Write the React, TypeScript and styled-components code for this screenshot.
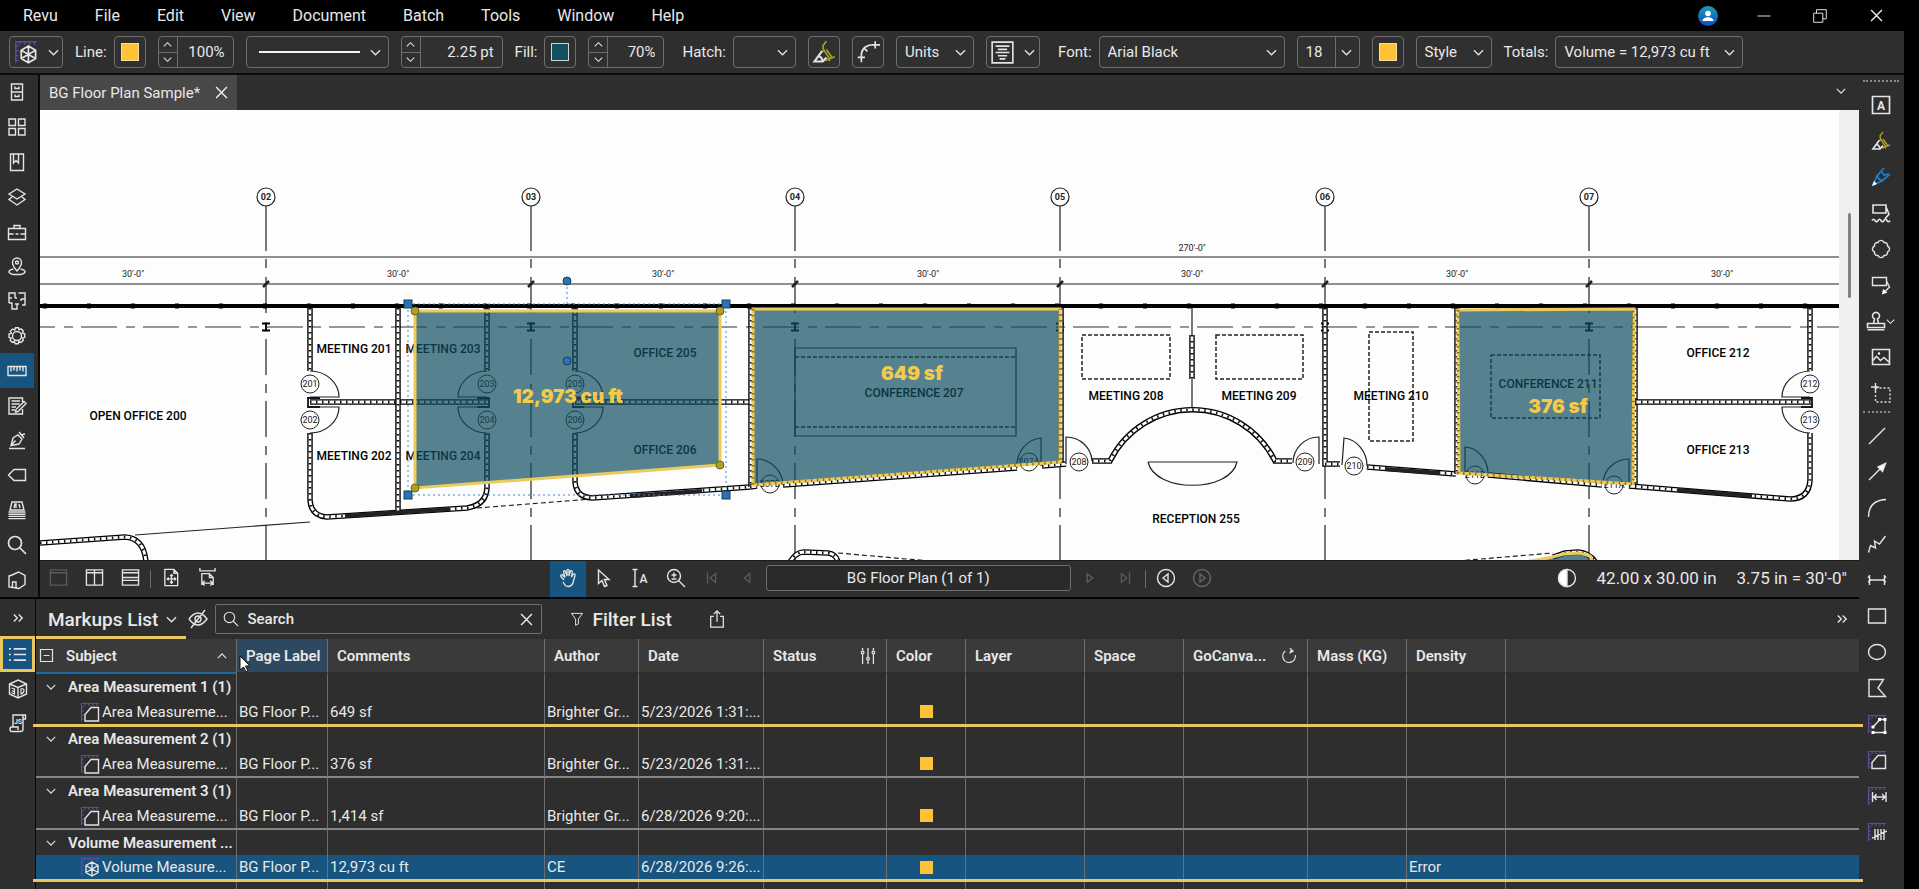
import React from "react";
import styled, { createGlobalStyle, css } from "styled-components";

const c = {
  panel: "#2e2e2e",
  header: "#3a3a3a",
  line: "#6e6e6e",
  text: "#e8e8e8",
  blue: "#17547f",
  gold: "#e9c95f",
  swatch: "#fdc236",
  purple: "#5f4a9c",
};

const GlobalStyle = createGlobalStyle`
  * { box-sizing: border-box; }
  html, body { margin: 0; background: #000; }
  body, button, input, select { font-family: Roboto, "Liberation Sans", sans-serif; font-size: 15px; color: ${c.text}; }
`;

/* ---------- page frame ---------- */

const Page = styled.div`
  min-height: 100vh;
  display: flex;
  flex-direction: column;
  background: #000;
`;

const Workspace = styled.div`
  flex: 1;
  display: flex;
  margin-right: 15px;
  background: ${c.panel};
`;

const Main = styled.main`
  flex: 1;
  min-width: 0;
  display: flex;
  flex-direction: column;
`;

const UpperPane = styled.div`
  flex: 1;
  min-height: 420px;
  display: flex;
`;

const DocumentColumn = styled.section`
  flex: 1;
  min-width: 0;
  display: flex;
  flex-direction: column;
`;

/* ---------- menu bar ---------- */

const MenuBar = styled.header`
  display: flex;
  align-items: center;
  gap: 1px;
  height: 31px;
  padding: 0 28px 0 5px;
`;

const MenuItem = styled.button`
  border: 0;
  background: none;
  padding: 0 18px;
  font-size: 16px;
  line-height: 28px;
`;

const WindowControls = styled.div`
  margin-left: auto;
  display: flex;
  align-items: center;
  gap: 26px;
`;

const BareButton = styled.button`
  border: 0;
  background: none;
  padding: 0;
  width: 30px;
  height: 28px;
  display: flex;
  align-items: center;
  justify-content: center;
`;

/* ---------- properties toolbar ---------- */

const PropertyBar = styled.div`
  display: flex;
  align-items: center;
  gap: 12px;
  height: 44px;
  margin-right: 15px;
  padding-left: 9px;
  background: ${c.panel};
  border-bottom: 2px solid #0c0c0c;
`;

const Field = styled.label<{ $section?: boolean }>`
  display: flex;
  align-items: center;
  gap: 7px;
  margin-left: ${(p) => (p.$section ? 6 : 0)}px;
`;

const frame = css`
  height: 32px;
  border: 1px solid ${c.line};
  border-radius: 4px;
  background: #303030;
`;

const ToolButton = styled.button<{ $w?: number }>`
  ${frame}
  width: ${(p) => p.$w ?? 32}px;
  padding: 0;
  display: flex;
  align-items: center;
  justify-content: center;
  gap: 10px;
`;

const Swatch = styled.span<{ $color: string; $edge: string }>`
  width: 18px;
  height: 18px;
  background: ${(p) => p.$color};
  border: 1px solid ${(p) => p.$edge};
`;

const Spinner = styled.div<{ $w: number }>`
  ${frame}
  width: ${(p) => p.$w}px;
  display: flex;
`;

const Steps = styled.div`
  width: 19px;
  display: flex;
  flex-direction: column;
  border-right: 1px solid ${c.line};
`;

const Step = styled.button`
  flex: 1;
  border: 0;
  padding: 0;
  background: none;
  display: flex;
  align-items: center;
  justify-content: center;
  & + & { border-top: 1px solid ${c.line}; }
`;

const SpinnerInput = styled.input`
  flex: 1;
  min-width: 0;
  border: 0;
  background: none;
  text-align: right;
  padding: 0 8px 0 0;
`;

const SelectFrame = styled.span<{ $w: number }>`
  ${frame}
  width: ${(p) => p.$w}px;
  display: grid;
  align-items: center;
  & > * { grid-area: 1 / 1; }
  & > svg { justify-self: end; margin-right: 7px; pointer-events: none; }
`;

const NativeSelect = styled.select`
  appearance: none;
  border: 0;
  background: none;
  width: 100%;
  height: 100%;
  padding: 0 8px;
`;

const SplitMark = styled.span`
  justify-self: end;
  height: 100%;
  width: 24px;
  border-left: 1px solid ${c.line};
  pointer-events: none;
`;

const LineSample = styled.span`
  height: 2px;
  margin: 0 28px 0 12px;
  background: #f4f4f4;
  pointer-events: none;
`;

/* ---------- rails ---------- */

const LeftRail = styled.nav`
  width: 40px;
  display: flex;
  flex-direction: column;
  border-right: 2px solid #0a0a0a;
`;

const RailButton = styled.button<{ $on?: boolean }>`
  flex: 1;
  width: 34px;
  border: 0;
  padding: 0;
  background: ${(p) => (p.$on ? c.blue : "none")};
  display: flex;
  align-items: center;
  justify-content: center;
`;

const RightRail = styled.nav`
  width: 45px;
  padding-top: 5px;
  display: flex;
  flex-direction: column;
`;

const Grip = styled.span<{ $w: number }>`
  height: 7px;
  width: ${(p) => p.$w}px;
  margin-left: 4px;
  border-top: 2px dotted #8a8a8a;
`;

const MarkupTool = styled.button<{ $low?: boolean }>`
  height: 36px;
  width: ${(p) => (p.$low ? 36 : 43)}px;
  border: 0;
  padding: 0;
  background: none;
  display: flex;
  align-items: center;
  justify-content: center;
`;

/* ---------- document ---------- */

const TabStrip = styled.div`
  height: 35px;
  display: flex;
  align-items: stretch;
  justify-content: space-between;
`;

const DocTab = styled.div`
  display: flex;
  align-items: center;
  gap: 6px;
  padding: 0 1px 0 9px;
  background: #484848;
`;

const Canvas = styled.div`
  flex: 1;
  min-height: 0;
  display: flex;
  background: #fdfdfd;
`;

const PlanSvg = styled.svg`
  height: 100%;
  display: block;
`;

const PlanHolder = styled.div`
  flex: 1;
  min-width: 0;
  contain: size;
`;

const ScrollTrack = styled.div`
  width: 20px;
  background: #f0f0f0;
  display: flex;
  justify-content: center;
  padding-top: 103px;
`;

const ScrollThumb = styled.span`
  width: 3px;
  height: 85px;
  border-radius: 2px;
  background: #828282;
`;

const ViewBar = styled.div`
  height: 37px;
  display: flex;
  align-items: center;
  justify-content: space-between;
  border-top: 1px solid #1c1c1c;
`;

const ViewGroup = styled.div`
  display: flex;
  align-items: center;
  height: 100%;
`;

const Readouts = styled.div`
  display: flex;
  align-items: center;
  gap: 20px;
  padding: 0 12px 3px;
  font-size: 17px;
`;

const ViewButton = styled.button<{ $on?: boolean }>`
  width: 36px;
  height: 100%;
  border: 0;
  padding: 0 0 3px;
  background: ${(p) => (p.$on ? c.blue : "none")};
  display: flex;
  align-items: center;
  justify-content: center;
`;

const Divider = styled.span`
  width: 1px;
  height: 18px;
  margin: 0 2px;
  background: #6a6a6a;
`;

const PageInput = styled.input`
  width: 305px;
  height: 26px;
  margin-bottom: 3px;
  border: 1px solid ${c.line};
  border-radius: 3px;
  background: #2a2a2a;
  text-align: center;
`;

/* ---------- markups list ---------- */

const Dock = styled.section`
  display: flex;
  border-top: 2px solid #050505;
`;

const DockRail = styled.nav`
  width: 36px;
  display: flex;
  flex-direction: column;
  border-right: 1px solid #0a0a0a;
`;

const DockButton = styled.button<{ $on?: boolean }>`
  height: ${(p) => (p.$on ? 36 : 34)}px;
  width: 35px;
  border: ${(p) => (p.$on ? `3px solid ${c.gold}` : "0")};
  padding: 0;
  background: ${(p) => (p.$on ? c.blue : "none")};
  display: flex;
  align-items: center;
  justify-content: center;
  &:first-child { height: 37px; }
`;

const DockPanel = styled.div`
  flex: 1;
  min-width: 0;
`;

const DockBar = styled.div`
  position: relative;
  height: 40px;
  display: flex;
  align-items: center;
  padding: 0 2px 0 12px;
  &::after {
    content: "";
    position: absolute;
    left: 0;
    bottom: 0;
    width: 150px;
    height: 3px;
    background: ${c.gold};
  }
`;

const DockTitle = styled.button`
  border: 0;
  background: none;
  padding: 0;
  display: flex;
  align-items: center;
  gap: 8px;
  margin-right: 6px;
  font-size: 19px;
  font-weight: 500;
  white-space: nowrap;
`;

const SearchBox = styled.label`
  width: 327px;
  height: 30px;
  margin: 0 28px 0 2px;
  border: 1px solid ${c.line};
  border-radius: 2px;
  display: flex;
  align-items: center;
  padding-left: 7px;
  gap: 8px;
`;

const SearchInput = styled.input`
  flex: 1;
  min-width: 0;
  border: 0;
  background: none;
  padding: 0;
  font-weight: 500;
  &::placeholder { color: ${c.text}; opacity: 1; }
`;

const ExportSlot = styled.div`
  margin-left: 24px;
`;

const Table = styled.table`
  width: 100%;
  table-layout: fixed;
  border-collapse: separate;
  border-spacing: 0;
`;

const HeadCell = styled.th<{ $hot?: boolean; $sorted?: boolean }>`
  position: relative;
  height: 35px;
  padding: 0 9px;
  text-align: left;
  font-weight: 600;
  white-space: nowrap;
  background: ${(p) => (p.$hot ? "#2e4860" : c.header)};
  border-right: 1px solid ${c.line};
  border-bottom: 2px solid ${(p) => (p.$sorted ? "#1b6ca4" : "transparent")};
  background-clip: padding-box;
  &:first-child { padding-left: 3px; }
  &:last-child { border-right: 0; }
`;

const HeadInner = styled.div`
  display: flex;
  align-items: center;
  & > svg:last-child:not(:first-child) { margin-left: auto; }
`;

const HeadText = styled.span<{ $indent?: boolean }>`
  margin-left: ${(p) => (p.$indent ? 12 : 0)}px;
`;

const Row = styled.tr<{ $h: number; $selected?: boolean }>`
  position: relative;
  height: ${(p) => p.$h}px;
  background: ${(p) => (p.$selected ? c.blue : "none")};
`;

const Cell = styled.td<{ $rule?: boolean }>`
  padding: 0 2px;
  line-height: 20px;
  white-space: nowrap;
  border-right: 1px solid ${c.line};
  border-bottom: ${(p) => (p.$rule ? "2px solid #858585" : "0")};
  &:last-child { border-right: 0; }
`;

const GroupLabel = styled.div`
  display: flex;
  align-items: center;
  gap: 12px;
  padding-left: 8px;
  font-weight: 600;
`;

const ItemLabel = styled.div`
  display: flex;
  align-items: center;
  gap: 2px;
  padding-left: 42px;
`;

const GoldRule = styled.span`
  position: absolute;
  left: -3px;
  right: -4px;
  bottom: -1px;
  height: 3px;
  background: ${c.gold};
  z-index: 1;
`;

const ColorChip = styled.span`
  display: block;
  width: 13px;
  height: 13px;
  margin: 0 auto;
  background: ${c.swatch};
`;

const Pointer = styled.svg`
  position: absolute;
  left: 2px;
  top: 16px;
  z-index: 2;
`;

/* ---------- icons ---------- */

const Svg = ({ size = 20, color = "#e4e4e4", children }: { size?: number; color?: string; children: React.ReactNode }) => (
  <svg width={size} height={size} viewBox="0 0 20 20" fill="none" stroke={color} strokeWidth="1.4" aria-hidden="true">
    {children}
  </svg>
);

const Chevron = ({ up = false, w = 11 }: { up?: boolean; w?: number }) => (
  <svg width={w} height={w} viewBox="0 0 12 12" fill="none" stroke="#e4e4e4" strokeWidth="1.4" aria-hidden="true">
    <path d={up ? "M1 8.500l5-5 5 5" : "M1 3.500l5 5 5-5"} />
  </svg>
);

const Cross = () => (
  <svg width="13" height="13" viewBox="0 0 12 12" stroke="#ececec" strokeWidth="1.3" aria-hidden="true">
    <path d="M1 1l10 10M11 1L1 11" />
  </svg>
);

const Rulers = () => <path stroke={c.purple} d="M1.500 19V1.500H19M1.500 5H4M1.500 9H4M1.500 13H4M1.500 17H4M5 1.500V4M9 1.500V4M13 1.500V4M17 1.500V4" strokeWidth="1.2" />;

const VolumeIcon = ({ size = 22 }: { size?: number }) => (
  <Svg size={size}>
    <Rulers />
    <path d="M12 5l6 3.500v7L12 19l-6-3.500v-7zM6 8.500l6 3.500 6-3.500M12 12v7M6 15.500l6-3.500 6 3.500M12 5v7" />
  </Svg>
);

const AreaIcon = () => (
  <Svg size={20}>
    <Rulers />
    <path d="M5 19V12.500L11 5.500h7.500V19z" />
  </Svg>
);

const HighlighterIcon = ({ size = 20 }: { size?: number }) => (
  <Svg size={size}>
    <path stroke="#a9a023" d="M12 1L9 5l1 5M9 7l6 9M12 8l5 7M11 17l8-3M13.500 16l1.500 1.500" />
    <path strokeWidth="1.700" d="M8.500 9L2 18h7l3-3.500M5 13.500c2 0 3.500 1.500 4 4.500" />
  </Svg>
);

const leftIcons: [string, React.ReactNode][] = [
  ["File access", <path d="M4.500 2h11v16h-11zM4.500 10h11M8 4.500v2h4v-2M8 12.500v2h4v-2" />],
  ["Thumbnails", <path d="M2 2h6.500v6.500H2zM11.500 2H18v6.500h-6.500zM2 11.500h6.500V18H2zM11.500 11.500H18V18h-6.500z" />],
  ["Bookmarks", <path d="M3.500 2h13v16.500h-13zM6.500 2v9L9 8.500l2.500 2.500V2" />],
  ["Layers", <path d="M10 2l8 5-8 5-8-5zM5 10l-3 2.500 8 5.500 8-5.500L15 10" />],
  ["Tool chest", <path d="M1.500 6.500h17v11h-17zM7 6.500v-3h6v3M1.500 12h5M8.500 12h3M13.500 12h5" />],
  ["Places", <path d="M10 15C7 11.500 5.500 9.500 5.500 6.500a4.500 4.500 0 019 0c0 3-1.500 5-4.500 8.500zM8.500 6.500a1.500 1.500 0 003 0 1.500 1.500 0 00-3 0M6.500 13C-1 14.500 1 18.500 10 18.500S21 14.500 13.500 13" />],
  ["Spaces", <path d="M8 7V2H2v10M2 7h3M8 7h2M11.500 2H18v12h-3M18 8h-4M14 8v2M2 12h3v6h5v-5H8M10 13h2" />],
  ["Properties", <><circle cx="10" cy="10" r="4.500" /><path d="M8.500 1.800h3l.5 2 2-1 2.300 2.200-1 2 2.400.8v3.500l-2.300.8 1 2.200-2.400 2.200-2-1-.8 2.200h-3l-.8-2.200-2.100 1L3.200 14.300l1-2.200L2 11.500V8l2.300-.7-1-2.200L5.600 3l2.200 1z" /></>],
  ["Measurements", <path d="M1 5.500h18v9H1zM4 5.500v5M7 5.500v4M10 5.500v5M13 5.500v4M16 5.500v5" />],
  ["Forms", <path d="M15.500 6V2H2v16h13.500v-5M4.500 5H13M4.500 8h8M4.500 11H9M4.500 14H8M9 13.500l8-8 2 2-8 8-2.500.5z" />],
  ["Signatures", <path d="M2 18.500h16M4 15.500L6 8l5-3 4 4-3 5zM4 15.500l4.500-5M12 2l5 6M14 5l4-1" />],
  ["Flags", <path d="M1.500 10L7 4.500h11.500v11H7z" />],
  ["Sets", <path d="M5 2h10l2 8H3zM7 8l1-4h1v4M12 4l1 4M1.500 12h17M1.500 14.200h17M1.500 16.400h17M1.500 18.600h17" />],
  ["Search", <path d="M1.500 8a6.500 6.500 0 0013 0 6.500 6.500 0 00-13 0M12.500 12.500l6.500 6.500" strokeWidth="1.700" />],
  ["Studio", <path d="M2 6l3-1 6.500-3L18 5.500v9l-6 4L2 17zM5.500 17v-5H9v5.500" />],
];

const upperTools: [string, React.ReactNode][] = [
  ["Text box", <Svg><path d="M1.500 1.500h17v17h-17z" strokeWidth="1.700" /><text x="10" y="14.500" textAnchor="middle" fontSize="12" fontWeight="700" fill="#e4e4e4" stroke="none">A</text></Svg>],
  ["Highlight", <HighlighterIcon />],
  ["Pen", <Svg><path stroke="#1f7fcb" strokeWidth="1.700" d="M13 1L6 9l-4 9 9-4 8-7M6 9c1 2 3 4 5 5M11 5l2 3 4-1" /><path d="M1 19l2-5 3 3z" fill="#fff" stroke="none" /></Svg>],
  ["Eraser", <Svg><path d="M2 2h13v8H2zM15 4l3 7-4 5M1 17.500q1.500-2.500 3 0t3 0 3 0 3 0 3 0 3 0" strokeWidth="1.600" /></Svg>],
  ["Cloud", <Svg><path d="M7 3.500a3.200 3.200 0 016 0 3 3 0 013.500 3.500 3.200 3.200 0 010 6A3 3 0 0113 16.500a3.200 3.200 0 01-6 0A3 3 0 013.500 13a3.200 3.200 0 010-6A3 3 0 017 3.500z" /></Svg>],
  ["Callout", <Svg><path d="M1.500 2.500h14v8h-14zM15.500 6l3 6-4 4" /><path d="M11 19.500l1-5.500 4.500 3.500z" fill="#fff" stroke="none" /></Svg>],
  ["Stamp", <Svg size={20}><path d="M1.500 12.500h17v4h-17zM1.500 18.800h17M7.500 12.500L8.500 8a3.500 3.500 0 113 0l1 4.500" strokeWidth="1.600" /></Svg>],
  ["Image", <Svg><path d="M1.500 2.500h17v15h-17zM1.500 14l4-4.500 4 4 3.500-3 5.500 5" strokeWidth="1.600" /><circle cx="8" cy="6.500" r="1.200" fill="#fff" stroke="none" /></Svg>],
  ["Snapshot", <Svg><path d="M4.500 5H19v14H4.500z" strokeDasharray="2 2" /><path d="M0 4h8M4.500 0v8" /></Svg>],
];

const lowerTools: [string, React.ReactNode][] = [
  ["Line", <path d="M2 18L18 2" />],
  ["Arrow", <><path d="M2 18L14 6" /><path d="M18.500 1.500L11 5l4.500 4.500z" fill="#fff" /></>],
  ["Arc", <path d="M1.500 19C1.500 8 8 2 19 1.500" />],
  ["Polyline", <path d="M1.500 18.500l2-7 5 2.500-1-7 5 3 6-8" />],
  ["Dimension", <path d="M2.500 5v10M17.500 5v10M2.500 10h15M1 6.500l3 3.500-3 2M19 6.500L16 10l3 2" />],
  ["Rectangle", <path d="M1.500 3h17v14h-17z" />],
  ["Ellipse", <ellipse cx="10" cy="10" rx="8.500" ry="7.500" />],
  ["Polygon", <path d="M2 1.500h14.500L11 10l7.500 8.500H2z" />],
  ["Polylength", <><Rulers /><path d="M6 18.500h12V5.500h-5L6 13" /><path d="M4.500 11.500h3v3h-3zM4.500 17h3v3h-3zM16.500 17h3v3h-3zM16.500 4h3v3h-3zM11 4h3v3h-3z" fill="#fff" stroke="none" /></>],
  ["Area", <><Rulers /><path d="M5 18.500V12.500L11 5.500h7.500v13z" /></>],
  ["Length", <><Rulers /><path d="M5.500 6v10M19 6v10M6 11h13M9.500 8L7 11l2.500 3M15 8l3 3-3 3" /></>],
  ["Count", <><Rulers /><path d="M8 7v11M11 7v11M14 7v11M17 7v11M5 16L20 9" /></>],
];

/* ---------- floor plan ---------- */

const gridX = [266, 531, 795, 1060, 1325, 1589];

const walls = [
  "M310 308V371", "M310 433V500Q311 516 327 517L467 508Q486 505 487 488V433", "M310 402H488", "M398 308V513",
  "M487 308V371", "M575 308V371", "M575 433V482Q576 497 592 498L750 487", "M575 402H751", "M751 308V487",
  "M1061 308V464", "M750 487L757 486", "M783 485L1017 468", "M1042 466L1066 464",
  "M1092 461H1110A92 92 0 0 1 1275 461H1292", "M1192 335V379", "M1325 308V464H1340", "M1367 467L1456 474",
  "M1457 308V474", "M1488 475L1602 485", "M1635 308V486", "M1629 486L1790 499Q1809 499 1810 480V433",
  "M1810 308V371", "M1635 402H1812", "M40 543L125 537Q144 538 146 562", "M790 562Q796 552 804 552L828 553Q836 554 838 562",
  "M1553 557L1565 553L1578 552Q1590 553 1596 563",
];

const denseRuns = ["M345 516L450 509", "M630 496L702 491", "M1385 469L1440 473", "M1678 490L1752 496"];

const doors = [
  "M310 371A29 26 0 0 1 339 397H310", "M310 433A29 26 0 0 0 339 407H310",
  "M487 371A29 26 0 0 0 458 397H487", "M487 433A29 26 0 0 1 458 407H487",
  "M575 371A29 26 0 0 1 603 397H575", "M575 433A29 26 0 0 0 603 407H575",
  "M1810 371A29 26 0 0 0 1782 397H1810", "M1810 433A29 26 0 0 1 1782 407H1810",
  "M757 485V459A27 27 0 0 1 783 485", "M1041 466V438A26 28 0 0 0 1017 468",
  "M1066 464V437A26 25 0 0 1 1092 461", "M1319 464V437A26 26 0 0 0 1293 463",
  "M1342 465L1344 438A26 28 0 0 1 1367 466", "M1465 473V447A24 27 0 0 1 1488 474", "M1629 485V459A26 25 0 0 0 1603 483",
];

const tags: [number, number, string][] = [
  [310, 384, "201"], [310, 420, "202"], [487, 384, "203"], [487, 420, "204"], [575, 384, "205"], [575, 420, "206"],
  [770, 484, "207B"], [1029, 462, "207A"], [1079, 462, "208"], [1305, 462, "209"], [1354, 466, "210"],
  [1475, 475, "211B"], [1614, 485, "211A"], [1810, 384, "212"], [1810, 420, "213"],
];

const rooms: [number, number, string][] = [
  [138, 416, "OPEN OFFICE  200"], [354, 349, "MEETING  201"], [354, 456, "MEETING  202"], [443, 349, "MEETING  203"],
  [443, 456, "MEETING  204"], [665, 353, "OFFICE  205"], [665, 450, "OFFICE  206"], [914, 393, "CONFERENCE  207"],
  [1126, 396, "MEETING  208"], [1259, 396, "MEETING  209"], [1391, 396, "MEETING  210"], [1548, 384, "CONFERENCE  211"],
  [1718, 353, "OFFICE  212"], [1718, 450, "OFFICE  213"], [1196, 519, "RECEPTION  255"],
];

const areas = ["753,309 1060,309 1060,462 753,485", "1458,310 1634,309 1633,484 1459,473", "1500,566 1548,558 1564,554 1580,553 1590,556 1594,566"];

const FloorPlan = () => (
  <PlanSvg viewBox="40 110 1799 450" preserveAspectRatio="xMinYMin slice" width="100%" role="img" aria-label="Floor plan">
    <rect x="40" y="110" width="1799" height="900" fill="#fdfdfd" />
    <g stroke="#222" fill="none" strokeWidth="1.200">
      <path d="M40 257H1839M40 284H1839" />
      <path d="M40 327H1839" strokeDasharray="36 9 9 8" strokeDashoffset="21" stroke="#333" />
      {gridX.map((x) => (
        <g key={x}>
          <circle cx={x} cy="197" r="9" />
          <path d={`M${x} 206V251M${x} 259V268`} />
          <path d={`M${x} 277V562`} strokeDasharray="36 9 9 8" />
          <path d={`M${x - 3} 287L${x + 3} 281`} strokeWidth="2.500" />
          <path d={`M${x - 4} 323.500H${x + 4}M${x - 4} 330.500H${x + 4}M${x} 323V331`} strokeWidth="1.800" stroke="#000" />
        </g>
      ))}
      <path d="M135 535L310 522" />
      <path d="M477 508L592 499M838 553L930 561M1457 561L1553 553" strokeDasharray="5 3" />
      <path d="M1192 308V410M795 348H1016V436H795zM1148 462H1237C1230 493 1155 493 1148 462" />
      <path d="M795 357H1016M795 427H1016M1082 335H1170V379H1082zM1216 335H1303V379H1216zM1369 332H1413V441H1369zM1491 355H1600V418H1491z" strokeDasharray="4 2" strokeWidth="1.500" />
    </g>
    <path d="M40 306H1839" stroke="#000" strokeWidth="4" />
    <path d="M43 306H1839" stroke="#000" strokeWidth="5" strokeDasharray="4 40" />
    <g fill="none">
      {walls.map((d) => (
        <g key={d}>
          <path d={d} stroke="#000" strokeWidth="5.500" />
          <path d={d} stroke="#fff" strokeWidth="2.800" />
          <path d={d} stroke="#111" strokeWidth="2.800" strokeDasharray="1.500 4.500" />
        </g>
      ))}
      {denseRuns.map((d) => <path key={d} d={d} stroke="#222" strokeWidth="4" />)}
      <path d="M320 398H308V407H320M477 398H489V407H477M584 398H573V407H584M1801 398H1812V407H1801" stroke="#111" strokeWidth="1.800" />
      {doors.map((d) => <path key={d} d={d} stroke="#222" strokeWidth="1.200" />)}
    </g>
    <g fontSize="9" textAnchor="middle" fill="#222">
      {tags.map(([x, y, t]) => (
        <g key={t}>
          <circle cx={x} cy={y} r="9" fill="#fdfdfd" stroke="#222" />
          <text x={x} y={y + 3}>{t}</text>
        </g>
      ))}
      {gridX.map((x, i) => <text key={x} x={x} y="200" fontWeight="700">{`0${i + 2}`}</text>)}
    </g>
    <g fontSize="9" textAnchor="middle" fill="#222">
      {[133, 398, 663, 928, 1192, 1457, 1722].map((x) => <text key={x} x={x} y="277">30'-0"</text>)}
      <text x="1192" y="251">270'-0"</text>
    </g>
    <g fontFamily='Roboto, "Liberation Sans", sans-serif' fontSize="12" fontWeight="500" textAnchor="middle" fill="#000">
      {rooms.map(([x, y, t]) => <text key={t} x={x} y={y + 4}>{t}</text>)}
    </g>
    <g fill="#0e4c5e" fillOpacity="0.7" stroke="#eccb5c" strokeWidth="3">
      {areas.map((p) => <polygon key={p} points={p} />)}
      <polygon points="415,311 720,311 720,465 415,488" />
    </g>
    <g fill="none" stroke="#8f7416" strokeWidth="3" strokeDasharray="1.500 4.500">
      <path d="M753 309V485L1060 462V309M1458 310V473L1633 484V309" />
    </g>
    <g fontFamily='Inter, "DejaVu Sans", sans-serif' fontWeight="900" fontSize="19" textAnchor="middle" fill="#f3ca4a">
      <text x="912" y="380">649 sf</text>
      <text x="568" y="403">12,973 cu ft</text>
      <text x="1558" y="413">376 sf</text>
    </g>
    <path d="M408 304H726V495H408zM567 304V285" fill="none" stroke="#4f86c6" strokeDasharray="2 3" />
    <g fill="#2a72b5" stroke="#17405f">
      {[[408, 304], [726, 304], [408, 495], [726, 495]].map(([x, y]) => <rect key={`${x}${y}`} x={x - 4} y={y - 4} width="8" height="8" />)}
      <circle cx="567" cy="281" r="4" />
      <circle cx="567" cy="361" r="4" />
    </g>
    <g fill="#aaa127" stroke="#6b6412">
      {[[415, 311], [720, 311], [720, 465], [415, 488]].map(([x, y]) => <circle key={`${x}${y}`} cx={x} cy={y} r="4" />)}
    </g>
  </PlanSvg>
);

/* ---------- sections ---------- */

const Select = ({ w, label, value, children }: { w: number; label: string; value: string; children?: React.ReactNode }) => (
  <SelectFrame $w={w}>
    <NativeSelect aria-label={label} defaultValue={value}>
      <option value={value}>{value}</option>
    </NativeSelect>
    {children}
    <Chevron />
  </SelectFrame>
);

const NumberSpinner = ({ w, label, value }: { w: number; label: string; value: string }) => (
  <Spinner $w={w}>
    <Steps>
      <Step aria-label={`Increase ${label}`}><Chevron up w={9} /></Step>
      <Step aria-label={`Decrease ${label}`}><Chevron w={9} /></Step>
    </Steps>
    <SpinnerInput aria-label={label} defaultValue={value} />
  </Spinner>
);

const Properties = () => (
  <PropertyBar>
    <ToolButton $w={54} aria-label="Volume measurement"><VolumeIcon size={24} /><Chevron /></ToolButton>
    <Field>Line:<ToolButton aria-label="Line color"><Swatch $color={c.swatch} $edge="#f7e0a0" /></ToolButton></Field>
    <NumberSpinner w={76} label="line opacity" value="100%" />
    <Select w={143} label="Line style" value=""><LineSample /></Select>
    <NumberSpinner w={102} label="line width" value="2.25 pt" />
    <Field>Fill:<ToolButton aria-label="Fill color"><Swatch $color="#15505f" $edge="#c8d8dc" /></ToolButton></Field>
    <NumberSpinner w={76} label="fill opacity" value="70%" />
    <Field $section>Hatch:<Select w={63} label="Hatch" value="" /></Field>
    <ToolButton aria-label="Highlight"><HighlighterIcon size={24} /></ToolButton>
    <ToolButton aria-label="Arc points">
      <Svg size={24}><path d="M4.500 18.500v-7C5 7 9 3.500 16 4M1.500 14.500h6M16 1v6M13 4h7M6.500 6.500l3 3" /></Svg>
    </ToolButton>
    <Select w={78} label="Units" value="Units" />
    <ToolButton $w={54} aria-label="Alignment">
      <Svg size={23}><path d="M1 1h18v18H1zM4 4.500h12M6 7.300h8M4 10h12M6 12.800h8M7.500 15.500h5" /></Svg>
      <Chevron />
    </ToolButton>
    <Field $section>Font:<Select w={186} label="Font" value="Arial Black" /></Field>
    <Select w={63} label="Font size" value="18"><SplitMark /></Select>
    <ToolButton aria-label="Text color"><Swatch $color={c.swatch} $edge="#f7e0a0" /></ToolButton>
    <Select w={76} label="Style" value="Style" />
    <Field>Totals:<Select w={188} label="Totals" value="Volume = 12,973 cu ft" /></Field>
  </PropertyBar>
);

const TriIcon = ({ d }: { d: string }) => <Svg size={18} color="#5e5e5e"><path d={d} /></Svg>;

const ViewControls = () => (
  <ViewBar>
    <ViewGroup>
      <ViewButton aria-label="Single page"><Svg size={19} color="#5a5a5a"><path d="M1.500 2h17v16h-17zM1.500 5h17" /></Svg></ViewButton>
      <ViewButton aria-label="Split vertical"><Svg size={19}><path d="M1.500 2h17v16h-17zM10 2v16M1.500 5h17" /></Svg></ViewButton>
      <ViewButton aria-label="Split horizontal"><Svg size={19}><path d="M1.500 2h17v16h-17zM1.500 10h17M1.500 5h17M1.500 13h17" /></Svg></ViewButton>
      <Divider />
      <ViewButton aria-label="Fit page"><Svg size={19}><path d="M3 1.500h9.500l4 4v13H3zM12.500 1.500v4h4M10 7v9M5.500 11.500h9M8.500 8.500L10 7l1.500 1.500M8.500 14.500L10 16l1.500-1.500M7 10l-1.500 1.500L7 13M13 10l1.500 1.500L13 13" /></Svg></ViewButton>
      <ViewButton aria-label="Fit width"><Svg size={19}><path d="M2 0v3h16V0M4 18V6h8l4 4v8M12 6v4h4M4 16h12M7 13.500L4.500 16 7 18.500M13 13.500l2.500 2.500-2.500 2.500" /></Svg></ViewButton>
    </ViewGroup>
    <ViewGroup>
      <ViewButton $on aria-label="Pan"><Svg size={20}><path d="M6 12L3 8.500c-1-1.500.8-2.500 2-1.300L7 9.500 5.500 4.200c-.3-1.600 1.500-2 2-.5L9 8V2.500c0-1.500 2-1.500 2 0V8l1.200-4.500c.5-1.500 2.200-1 2 .5L13.500 9l1.500-2.500c.8-1.300 2.500-.5 2 1L15.500 13c-.8 4-2.500 5.500-5.500 5.500-2.500 0-3.500-1.500-5-4.500" strokeWidth="1.300" /></Svg></ViewButton>
      <ViewButton aria-label="Select"><Svg size={20}><path d="M4.500 2v13.500l3.500-3 2.500 6 2.500-1-2.500-6H15z" /></Svg></ViewButton>
      <ViewButton aria-label="Select text"><Svg size={20}><path d="M2.500 1.500h5M5 1.500v17M2.500 18.500h5" /><text x="13.500" y="14.500" textAnchor="middle" fontSize="12" fontWeight="500" fill="#e4e4e4" stroke="none">A</text></Svg></ViewButton>
      <ViewButton aria-label="Zoom"><Svg size={20}><circle cx="8" cy="8" r="6.500" /><path d="M12.500 12.500l6.500 6.500M8 4.500v5M5.500 7h5M5.500 11h5" /></Svg></ViewButton>
      <ViewButton aria-label="First page"><TriIcon d="M5 4v12M14 5v10l-6-5z" /></ViewButton>
      <ViewButton aria-label="Previous page"><TriIcon d="M12 5v10l-6-5z" /></ViewButton>
      <PageInput aria-label="Page" defaultValue="BG Floor Plan (1 of 1)" />
      <ViewButton aria-label="Next page"><TriIcon d="M8 5v10l6-5z" /></ViewButton>
      <ViewButton aria-label="Last page"><TriIcon d="M15 4v12M6 5v10l6-5z" /></ViewButton>
      <Divider />
      <ViewButton aria-label="Previous view"><Svg><circle cx="10" cy="10" r="8.500" /><path d="M12 6v8l-5-4z" /></Svg></ViewButton>
      <ViewButton aria-label="Next view"><Svg color="#666"><circle cx="10" cy="10" r="8.500" /><path d="M8 6v8l5-4z" /></Svg></ViewButton>
    </ViewGroup>
    <Readouts>
      <Svg><circle cx="10" cy="10" r="8.500" /><path d="M10 1.500a8.500 8.500 0 000 17z" fill="#fff" /></Svg>
      <span>42.00 x 30.00 in</span>
      <span>3.75 in = 30'-0"</span>
    </Readouts>
  </ViewBar>
);

const columns: [string, number | undefined][] = [
  ["Subject", 201], ["Page Label", 91], ["Comments", 217], ["Author", 94], ["Date", 125], ["Status", 123], ["Color", 79],
  ["Layer", 119], ["Space", 99], ["GoCanva...", 124], ["Mass (KG)", 99], ["Density", 99], ["", undefined],
];

type Entry = { group: string; subject: string; comment: string; author: string; date: string; density?: string; volume?: boolean; gold?: boolean };

const entries: Entry[] = [
  { group: "Area Measurement 1 (1)", subject: "Area Measureme...", comment: "649 sf", author: "Brighter Gr...", date: "5/23/2026 1:31:...", gold: true },
  { group: "Area Measurement 2 (1)", subject: "Area Measureme...", comment: "376 sf", author: "Brighter Gr...", date: "5/23/2026 1:31:..." },
  { group: "Area Measurement 3 (1)", subject: "Area Measureme...", comment: "1,414 sf", author: "Brighter Gr...", date: "6/28/2026 9:20:..." },
  { group: "Volume Measurement ...", subject: "Volume Measure...", comment: "12,973 cu ft", author: "CE", date: "6/28/2026 9:26:...", density: "Error", volume: true, gold: true },
];

const blanks = (n: number) => Array.from({ length: n }, (_, i) => i);

const MarkupsTable = () => (
  <Table>
    <colgroup>{columns.map(([name, w]) => <col key={name} width={w} />)}</colgroup>
    <thead>
      <tr>
        {columns.map(([name]) => (
          <HeadCell key={name} scope="col" $sorted={name === "Subject"} $hot={name === "Page Label"}>
            <HeadInner>
              {name === "Subject" && <Svg size={15}><path d="M2 2h16v16H2zM6 10h8" strokeWidth="1.600" /></Svg>}
              <HeadText $indent={name === "Subject"}>{name}</HeadText>
              {name === "Subject" && <Chevron up w={10} />}
              {name === "Status" && <Svg size={18}><path d="M4 8v11M4 1v3M10 1v10M10 15v4M16 8v11M16 1v3" /><circle cx="4" cy="6" r="1.500" /><circle cx="10" cy="13" r="1.500" /><circle cx="16" cy="6" r="1.500" /></Svg>}
              {name === "GoCanva..." && <Svg size={18}><path d="M6 4.500A7 7 0 1017 9M11 1.500l3.500 3-4 2.500M14.500 4.500L11 4.500" /></Svg>}
            </HeadInner>
            {name === "Page Label" && (
              <Pointer width="12" height="18" viewBox="0 0 12 18" aria-hidden="true"><path d="M1 1v14l3.500-3 2.500 5 2-1-2.500-5H11z" fill="#fff" stroke="#111" /></Pointer>
            )}
          </HeadCell>
        ))}
      </tr>
    </thead>
    <tbody>
      {entries.map((e) => (
        <React.Fragment key={e.group}>
          <Row $h={25}>
            <Cell><GroupLabel><Chevron w={10} />{e.group}</GroupLabel></Cell>
            {blanks(12).map((i) => <Cell key={i} />)}
          </Row>
          <Row $h={e.volume ? 26 : 27} $selected={e.volume}>
            <Cell $rule>
              <ItemLabel>{e.volume ? <VolumeIcon size={20} /> : <AreaIcon />}{e.subject}</ItemLabel>
              {e.gold && <GoldRule />}
            </Cell>
            <Cell $rule>BG Floor P...</Cell>
            <Cell $rule>{e.comment}</Cell>
            <Cell $rule>{e.author}</Cell>
            <Cell $rule>{e.date}</Cell>
            <Cell $rule />
            <Cell $rule><ColorChip /></Cell>
            {blanks(4).map((i) => <Cell $rule key={i} />)}
            <Cell $rule>{e.density}</Cell>
            <Cell $rule />
          </Row>
        </React.Fragment>
      ))}
      <Row $h={8}>{blanks(13).map((i) => <Cell key={i} />)}</Row>
    </tbody>
  </Table>
);

const DoubleChevron = () => <Svg size={14}><path d="M4 5l5 5-5 5M11 5l5 5-5 5" strokeWidth="2" /></Svg>;

export default function App() {
  return (
    <>
      <GlobalStyle />
      <Page>
        <MenuBar>
          {["Revu", "File", "Edit", "View", "Document", "Batch", "Tools", "Window", "Help"].map((m) => <MenuItem key={m}>{m}</MenuItem>)}
          <WindowControls>
            <BareButton aria-label="Account">
              <svg width="20" height="20" viewBox="0 0 20 20" aria-hidden="true">
                <defs><linearGradient id="avatar" x1="0" y1="0" x2="0" y2="1"><stop offset="0" stopColor="#1f9bb5" /><stop offset="1" stopColor="#0b4fc4" /></linearGradient></defs>
                <circle cx="10" cy="10" r="10" fill="url(#avatar)" />
                <circle cx="10" cy="7.500" r="2.800" fill="#fff" />
                <path d="M4.500 15c0-5 11-5 11 0z" fill="#fff" />
              </svg>
            </BareButton>
            <BareButton aria-label="Minimize"><Svg size={14}><path d="M1 10h18" /></Svg></BareButton>
            <BareButton aria-label="Restore"><Svg size={14}><path d="M1 6h13v13H1zM5 6V1h14v13h-5" /></Svg></BareButton>
            <BareButton aria-label="Close"><Cross /></BareButton>
          </WindowControls>
        </MenuBar>
        <Properties />
        <Workspace>
          <Main>
            <UpperPane>
              <LeftRail>
                {leftIcons.map(([name, d]) => <RailButton key={name} aria-label={name} $on={name === "Measurements"}><Svg>{d}</Svg></RailButton>)}
              </LeftRail>
              <DocumentColumn>
                <TabStrip>
                  <DocTab>BG Floor Plan Sample*<BareButton aria-label="Close tab"><Cross /></BareButton></DocTab>
                  <ViewButton aria-label="More tabs"><Chevron w={10} /></ViewButton>
                </TabStrip>
                <Canvas>
                  <PlanHolder><FloorPlan /></PlanHolder>
                  <ScrollTrack><ScrollThumb /></ScrollTrack>
                </Canvas>
                <ViewControls />
              </DocumentColumn>
            </UpperPane>
            <Dock>
              <DockRail>
                <DockButton aria-label="Expand"><DoubleChevron /></DockButton>
                <DockButton $on aria-label="Markups list"><Svg size={19}><path d="M6 4h13M6 10h13M6 16h13M1 4h2M1 10h2M1 16h2" strokeWidth="1.800" /></Svg></DockButton>
                <DockButton aria-label="3D model tree">
                  <Svg><path d="M10 1l8.500 4v10L10 19l-8.500-4V5zM1.500 5l8.500 3.500L18.500 5M10 8.500V19" /><path d="M3.500 9l3 1v5l-3-1.500M4 11.800l2.500.8M13 10v5c4-1.500 4-6.500 0-5z" strokeWidth="1.200" /></Svg>
                </DockButton>
                <DockButton aria-label="Scripts"><Svg><path d="M5 14V2h12.500v4H15M15 2v14.500c0 2-2 2-3 2H3.500c-2 0-2-4.500 0-4.500H10v3" /><text x="10" y="11" textAnchor="middle" fontSize="7" fontWeight="700" fill="#e4e4e4" stroke="none">JS</text></Svg></DockButton>
              </DockRail>
              <DockPanel>
                <DockBar>
                  <DockTitle>Markups List<Chevron w={11} /></DockTitle>
                  <BareButton aria-label="Hide markups"><Svg><path d="M1 10q9-12 18 0-9 12-18 0M17 1L3 19M7 10a3 3 0 006 0 3 3 0 00-6 0" /></Svg></BareButton>
                  <SearchBox>
                    <Svg size={16}><path d="M1.500 8a6.500 6.500 0 0013 0 6.500 6.500 0 00-13 0M12.500 12.500l6.500 6.500" /></Svg>
                    <SearchInput aria-label="Search markups" placeholder="Search" />
                    <BareButton aria-label="Clear search"><Cross /></BareButton>
                  </SearchBox>
                  <DockTitle><Svg size={14}><path d="M2 2h16l-6 8v7l-4 2v-9z" /></Svg>Filter List</DockTitle>
                  <ExportSlot>
                    <BareButton aria-label="Export"><Svg size={18}><path d="M6.500 7H3v12h14V7h-3.500M10 13V1M6.500 4.500L10 1l3.500 3.500" /></Svg></BareButton>
                  </ExportSlot>
                  <WindowControls><BareButton aria-label="Collapse"><DoubleChevron /></BareButton></WindowControls>
                </DockBar>
                <MarkupsTable />
              </DockPanel>
            </Dock>
          </Main>
          <RightRail>
            <Grip $w={36} />
            {upperTools.map(([name, icon]) => <MarkupTool key={name} aria-label={name}>{icon}{name === "Stamp" && <Chevron w={9} />}</MarkupTool>)}
            <Grip $w={27} />
            {lowerTools.map(([name, icon]) => <MarkupTool $low key={name} aria-label={name}><Svg>{icon}</Svg></MarkupTool>)}
          </RightRail>
        </Workspace>
      </Page>
    </>
  );
}
